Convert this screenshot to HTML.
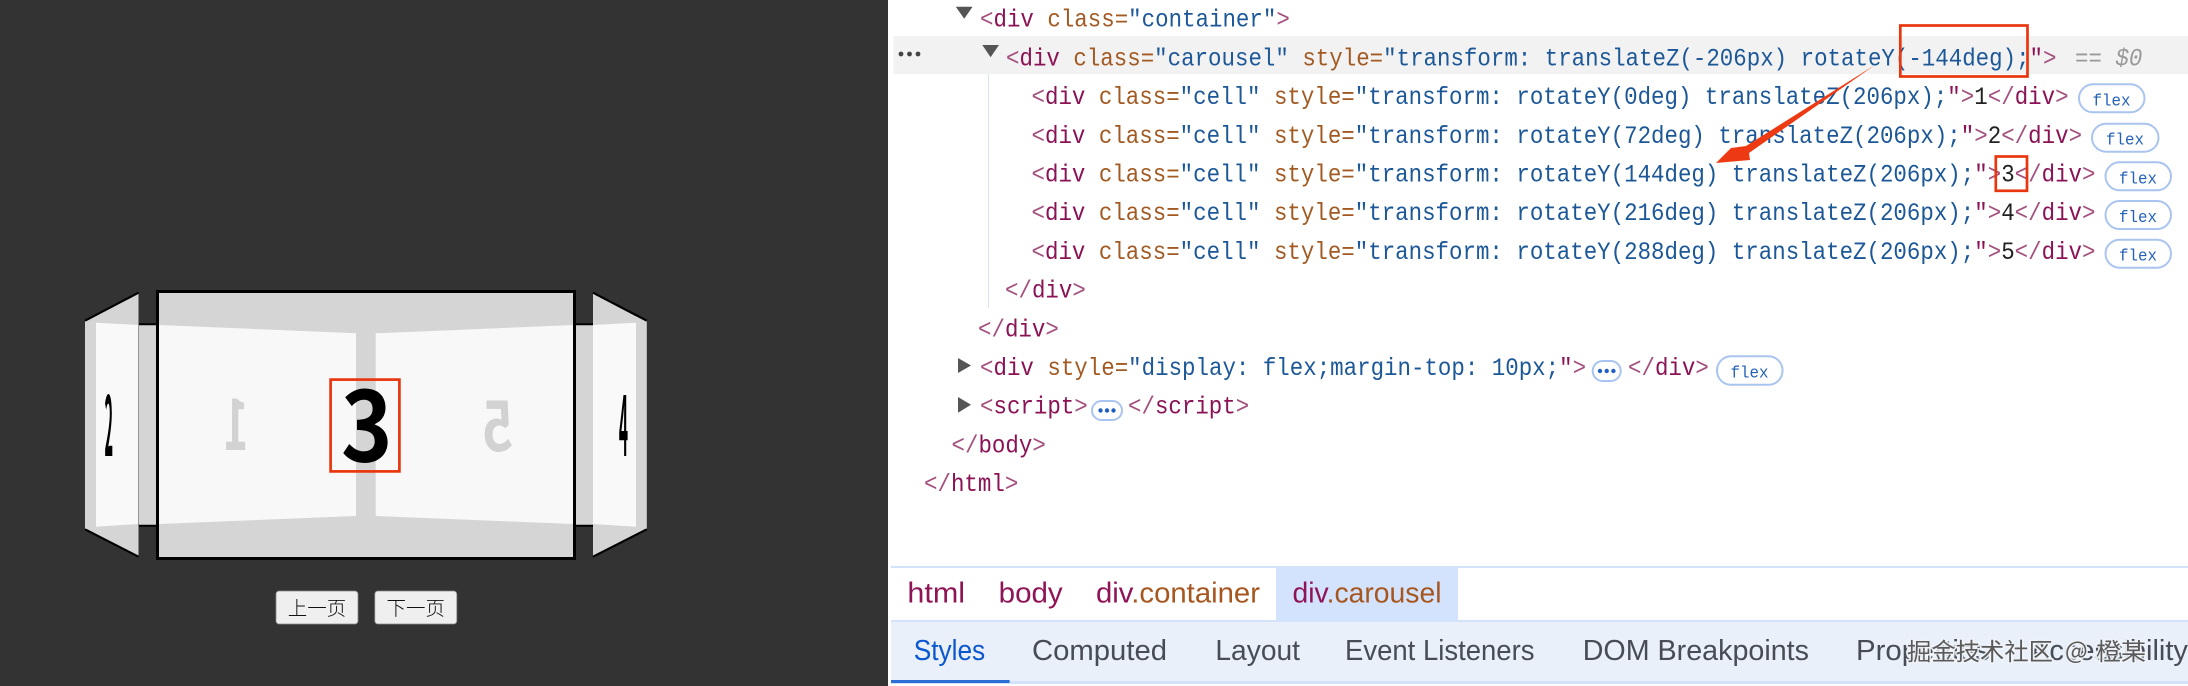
<!DOCTYPE html>
<html lang="zh"><head><meta charset="utf-8"><title>carousel devtools</title>
<style>
html,body{margin:0;padding:0;background:#fff;width:2188px;height:686px;overflow:hidden}
svg{display:block}
.m{font-family:"Liberation Mono",monospace;font-size:25px;white-space:pre}
.b{fill:#a3507e}.t{fill:#8a1255}.a{fill:#a25a22}.v{fill:#1c5797}.k{fill:#222}
.d{font-family:"Noto Sans CJK SC","Liberation Sans",sans-serif;font-weight:700;font-size:97px;text-anchor:middle}
.f{font-family:"Liberation Mono",monospace;font-size:17px;fill:#2462b8;text-anchor:middle}
.p{stroke:#a9c4ee;stroke-width:2}
.tab{font-family:"Liberation Sans",sans-serif;font-size:29px;fill:#474c55}
.cr{font-family:"Liberation Sans",sans-serif;font-size:29px}
.bt{font-family:"Liberation Sans","Noto Sans CJK SC",sans-serif;font-size:19.5px;fill:#111;text-anchor:middle;font-weight:300}
.w{font-family:"Noto Sans CJK SC",sans-serif;font-size:24px;fill:#5a5a5a;stroke:#f0f4fa;stroke-width:3.2px;paint-order:stroke;stroke-opacity:.92}
</style></head><body>
<svg xmlns="http://www.w3.org/2000/svg" width="2188" height="686" viewBox="0 0 2188 686">
<rect width="2188" height="686" fill="#fff"/>
<rect width="888" height="686" fill="#333"/>

<!-- back strips -->
<rect x="139" y="324" width="18" height="202" fill="#d5d5d5"/>
<rect x="575" y="324" width="18" height="202" fill="#d5d5d5"/>
<path d="M139 324.2H157M139 525.8H157M575 324.2H593M575 525.8H593" stroke="#000" stroke-width="2"/>
<!-- outer left -->
<polygon points="85,320.7 138.5,292.7 138.5,556.7 85,529.3" fill="#d5d5d5"/>
<polygon points="96,322.7 138.5,325 138.5,524 96,526.7" fill="#f9f9f9"/>
<path d="M85 320.7L138.5 292.7M85 529.3L138.5 556.7" stroke="#000" stroke-width="2.2"/>
<!-- outer right -->
<polygon points="593,292.7 646.8,320.7 646.8,529.3 593,556.7" fill="#d5d5d5"/>
<polygon points="593,325 636,322.7 636,526.7 593,524" fill="#f9f9f9"/>
<path d="M593 292.7L646.8 320.7M593 556.7L646.8 529.3" stroke="#000" stroke-width="2.2"/>
<!-- main -->
<rect x="157.5" y="291.5" width="417" height="267" fill="#d5d5d5" stroke="#000" stroke-width="3"/>
<polygon points="159,325 356,333.3 356,516 159,524" fill="#f8f8f8"/>
<polygon points="375.7,333.3 573,325 573,524 375.7,516" fill="#f8f8f8"/>

<!-- digits -->
<text class="d" transform="translate(108.8,456) scale(.15,.85)" fill="#000">2</text>
<text class="d" transform="translate(623.5,456) scale(.16,.85)" fill="#000">4</text>
<text class="d" transform="translate(236,450) scale(-.44,.72)" fill="#d2d2d2">1</text>
<text class="d" transform="translate(497.5,451) scale(-.55,.7)" fill="#d2d2d2">5</text>
<text class="d" transform="translate(366.8,461.7) scale(.9,1)" fill="#000">3</text>
<rect x="330.6" y="379.6" width="68.8" height="91.8" fill="none" stroke="#e8360f" stroke-width="2.7"/>

<!-- buttons -->
<rect x="276" y="591" width="82" height="33" rx="3" fill="#efefef" stroke="#8a8a8a" stroke-width=".8"/>
<rect x="374.8" y="591" width="82" height="33" rx="3" fill="#efefef" stroke="#8a8a8a" stroke-width=".8"/>
<text class="bt" x="317" y="615">上一页</text>
<text class="bt" x="415.8" y="615">下一页</text>

<!-- highlight -->
<rect x="893.5" y="36" width="1295" height="38" fill="#f2f2f2"/>
<circle cx="901" cy="54" r="2.4" fill="#444"/><circle cx="909.5" cy="54" r="2.4" fill="#444"/><circle cx="918" cy="54" r="2.4" fill="#444"/>
<polygon points="955.8,6.7 972.6,6.7 964.2,18.7" fill="#555"/>
<polygon points="982.3,45 999,45 990.6,57.3" fill="#555"/>
<polygon points="958,358 971,365.5 958,373" fill="#555"/>
<polygon points="958,397 971,404.8 958,412.7" fill="#555"/>
<rect x="988" y="74" width="1" height="234" fill="#d6e2f5"/>

<!-- DOM tree -->
<text class="m" transform="translate(980,26.7) scale(.898,1)"><tspan class="b">&lt;</tspan><tspan class="t">div</tspan> <tspan class="a">class=</tspan><tspan class="v">"container"</tspan><tspan class="b">&gt;</tspan></text>
<text class="m" transform="translate(1006,65.4) scale(.898,1)"><tspan class="b">&lt;</tspan><tspan class="t">div</tspan> <tspan class="a">class=</tspan><tspan class="v">"carousel"</tspan> <tspan class="a">style=</tspan><tspan class="v">"transform: translateZ(-206px) rotateY(-144deg);</tspan><tspan class="t">"</tspan><tspan class="b">&gt;</tspan></text>
<text class="m" transform="translate(2075,65.4) scale(.898,1)" fill="#999" font-style="italic">== $0</text>

<text class="m" transform="translate(1031.5,104.1) scale(.898,1)"><tspan class="b">&lt;</tspan><tspan class="t">div</tspan> <tspan class="a">class=</tspan><tspan class="v">"cell"</tspan> <tspan class="a">style=</tspan><tspan class="v">"transform: rotateY(0deg) translateZ(206px);</tspan><tspan class="t">"</tspan><tspan class="b">&gt;</tspan><tspan class="k">1</tspan><tspan class="b">&lt;/</tspan><tspan class="t">div</tspan><tspan class="b">&gt;</tspan></text>
<text class="m" transform="translate(1031.5,142.8) scale(.898,1)"><tspan class="b">&lt;</tspan><tspan class="t">div</tspan> <tspan class="a">class=</tspan><tspan class="v">"cell"</tspan> <tspan class="a">style=</tspan><tspan class="v">"transform: rotateY(72deg) translateZ(206px);</tspan><tspan class="t">"</tspan><tspan class="b">&gt;</tspan><tspan class="k">2</tspan><tspan class="b">&lt;/</tspan><tspan class="t">div</tspan><tspan class="b">&gt;</tspan></text>
<text class="m" transform="translate(1031.5,181.5) scale(.898,1)"><tspan class="b">&lt;</tspan><tspan class="t">div</tspan> <tspan class="a">class=</tspan><tspan class="v">"cell"</tspan> <tspan class="a">style=</tspan><tspan class="v">"transform: rotateY(144deg) translateZ(206px);</tspan><tspan class="t">"</tspan><tspan class="b">&gt;</tspan><tspan class="k">3</tspan><tspan class="b">&lt;/</tspan><tspan class="t">div</tspan><tspan class="b">&gt;</tspan></text>
<text class="m" transform="translate(1031.5,220.2) scale(.898,1)"><tspan class="b">&lt;</tspan><tspan class="t">div</tspan> <tspan class="a">class=</tspan><tspan class="v">"cell"</tspan> <tspan class="a">style=</tspan><tspan class="v">"transform: rotateY(216deg) translateZ(206px);</tspan><tspan class="t">"</tspan><tspan class="b">&gt;</tspan><tspan class="k">4</tspan><tspan class="b">&lt;/</tspan><tspan class="t">div</tspan><tspan class="b">&gt;</tspan></text>
<text class="m" transform="translate(1031.5,258.9) scale(.898,1)"><tspan class="b">&lt;</tspan><tspan class="t">div</tspan> <tspan class="a">class=</tspan><tspan class="v">"cell"</tspan> <tspan class="a">style=</tspan><tspan class="v">"transform: rotateY(288deg) translateZ(206px);</tspan><tspan class="t">"</tspan><tspan class="b">&gt;</tspan><tspan class="k">5</tspan><tspan class="b">&lt;/</tspan><tspan class="t">div</tspan><tspan class="b">&gt;</tspan></text>
<text class="m" transform="translate(1005,297.6) scale(.898,1)"><tspan class="b">&lt;/</tspan><tspan class="t">div</tspan><tspan class="b">&gt;</tspan></text>
<text class="m" transform="translate(978,336.3) scale(.898,1)"><tspan class="b">&lt;/</tspan><tspan class="t">div</tspan><tspan class="b">&gt;</tspan></text>
<text class="m" transform="translate(980,375) scale(.898,1)"><tspan class="b">&lt;</tspan><tspan class="t">div</tspan> <tspan class="a">style=</tspan><tspan class="v">"display: flex;margin-top: 10px;</tspan><tspan class="t">"</tspan><tspan class="b">&gt;</tspan></text>
<text class="m" transform="translate(1628,375) scale(.898,1)"><tspan class="b">&lt;/</tspan><tspan class="t">div</tspan><tspan class="b">&gt;</tspan></text>
<text class="m" transform="translate(980,413.7) scale(.898,1)"><tspan class="b">&lt;</tspan><tspan class="t">script</tspan><tspan class="b">&gt;</tspan></text>
<text class="m" transform="translate(1128,413.7) scale(.898,1)"><tspan class="b">&lt;/</tspan><tspan class="t">script</tspan><tspan class="b">&gt;</tspan></text>
<text class="m" transform="translate(951.5,452.4) scale(.898,1)"><tspan class="b">&lt;/</tspan><tspan class="t">body</tspan><tspan class="b">&gt;</tspan></text>
<text class="m" transform="translate(924,491.1) scale(.898,1)"><tspan class="b">&lt;/</tspan><tspan class="t">html</tspan><tspan class="b">&gt;</tspan></text>

<!-- pills -->
<g fill="#fff">
<rect class="p" x="2079" y="84.3" width="65.5" height="28" rx="14"/>
<rect class="p" x="2092" y="123.7" width="66.5" height="28" rx="14"/>
<rect class="p" x="2105.5" y="162.3" width="65.5" height="28" rx="14"/>
<rect class="p" x="2105.5" y="201" width="65.5" height="28" rx="14"/>
<rect class="p" x="2105.5" y="239.7" width="65.5" height="28" rx="14"/>
<rect class="p" x="1717" y="356.3" width="65.5" height="28.5" rx="14"/>
<rect class="p" x="1592.7" y="361" width="28" height="20" rx="10"/>
<rect class="p" x="1092" y="401" width="30" height="19" rx="9.5"/>
</g>
<text class="f" x="2111.5" y="105.3" textLength="38" lengthAdjust="spacingAndGlyphs">flex</text>
<text class="f" x="2125" y="144.7" textLength="38" lengthAdjust="spacingAndGlyphs">flex</text>
<text class="f" x="2138" y="183.3" textLength="38" lengthAdjust="spacingAndGlyphs">flex</text>
<text class="f" x="2138" y="222" textLength="38" lengthAdjust="spacingAndGlyphs">flex</text>
<text class="f" x="2138" y="260.7" textLength="38" lengthAdjust="spacingAndGlyphs">flex</text>
<text class="f" x="1749.5" y="377.3" textLength="38" lengthAdjust="spacingAndGlyphs">flex</text>
<g fill="#1f5fc4"><circle cx="1600" cy="371" r="2.2"/><circle cx="1606.7" cy="371" r="2.2"/><circle cx="1613.4" cy="371" r="2.2"/>
<circle cx="1100.5" cy="410.5" r="2.2"/><circle cx="1107" cy="410.5" r="2.2"/><circle cx="1113.5" cy="410.5" r="2.2"/></g>

<!-- annotations -->
<rect x="1900.3" y="25.5" width="127.2" height="51" fill="none" stroke="#e8360f" stroke-width="2.7"/>
<rect x="1995.8" y="156.5" width="31.2" height="34.3" fill="none" stroke="#e8360f" stroke-width="2.7"/>
<polygon points="1875,65 1746,146 1731,148 1716,163 1750,160 1749,153" fill="#ee3a13"/>

<!-- breadcrumb -->
<rect x="891" y="566" width="1297" height="2" fill="#d3e3fb"/>
<rect x="1276" y="568" width="182" height="53" fill="#d3e3fd"/>
<text class="cr" x="907.4" y="602.7" fill="#8f1456" textLength="57.7" lengthAdjust="spacingAndGlyphs">html</text>
<text class="cr" x="998.7" y="602.7" fill="#8f1456" textLength="64" lengthAdjust="spacingAndGlyphs">body</text>
<text class="cr" x="1096" y="602.7" textLength="164" lengthAdjust="spacingAndGlyphs"><tspan fill="#8f1456">div</tspan><tspan fill="#a6561f">.container</tspan></text>
<text class="cr" x="1292.5" y="602.7" textLength="149" lengthAdjust="spacingAndGlyphs"><tspan fill="#8f1456">div</tspan><tspan fill="#a6561f">.carousel</tspan></text>

<!-- tabs -->
<rect x="891" y="620" width="1297" height="2" fill="#d3e3fb"/>
<rect x="891" y="622" width="1297" height="59" fill="#e9f0f9"/>
<rect x="891" y="681" width="1297" height="3" fill="#d3e3fb"/>
<rect x="891" y="680" width="118.6" height="3" fill="#2a6fd6"/>
<text class="tab" x="913.7" y="660" style="fill:#0b57d0" textLength="71.5" lengthAdjust="spacingAndGlyphs">Styles</text>
<text class="tab" x="1032" y="660" textLength="135" lengthAdjust="spacingAndGlyphs">Computed</text>
<text class="tab" x="1215.4" y="660" textLength="84.6" lengthAdjust="spacingAndGlyphs">Layout</text>
<text class="tab" x="1345" y="660" textLength="189.5" lengthAdjust="spacingAndGlyphs">Event Listeners</text>
<text class="tab" x="1582.7" y="660" textLength="226.3" lengthAdjust="spacingAndGlyphs">DOM Breakpoints</text>
<text class="tab" x="1856" y="660" textLength="134" lengthAdjust="spacingAndGlyphs">Properties</text>
<text class="tab" x="2030" y="660">Accessibility</text>
<text class="w" x="1907" y="660" textLength="146" lengthAdjust="spacingAndGlyphs">掘金技术社区</text>
<text class="w" x="2065" y="659">@</text>
<text class="w" x="2096" y="660" textLength="50" lengthAdjust="spacingAndGlyphs">橙某</text>
</svg>
</body></html>
